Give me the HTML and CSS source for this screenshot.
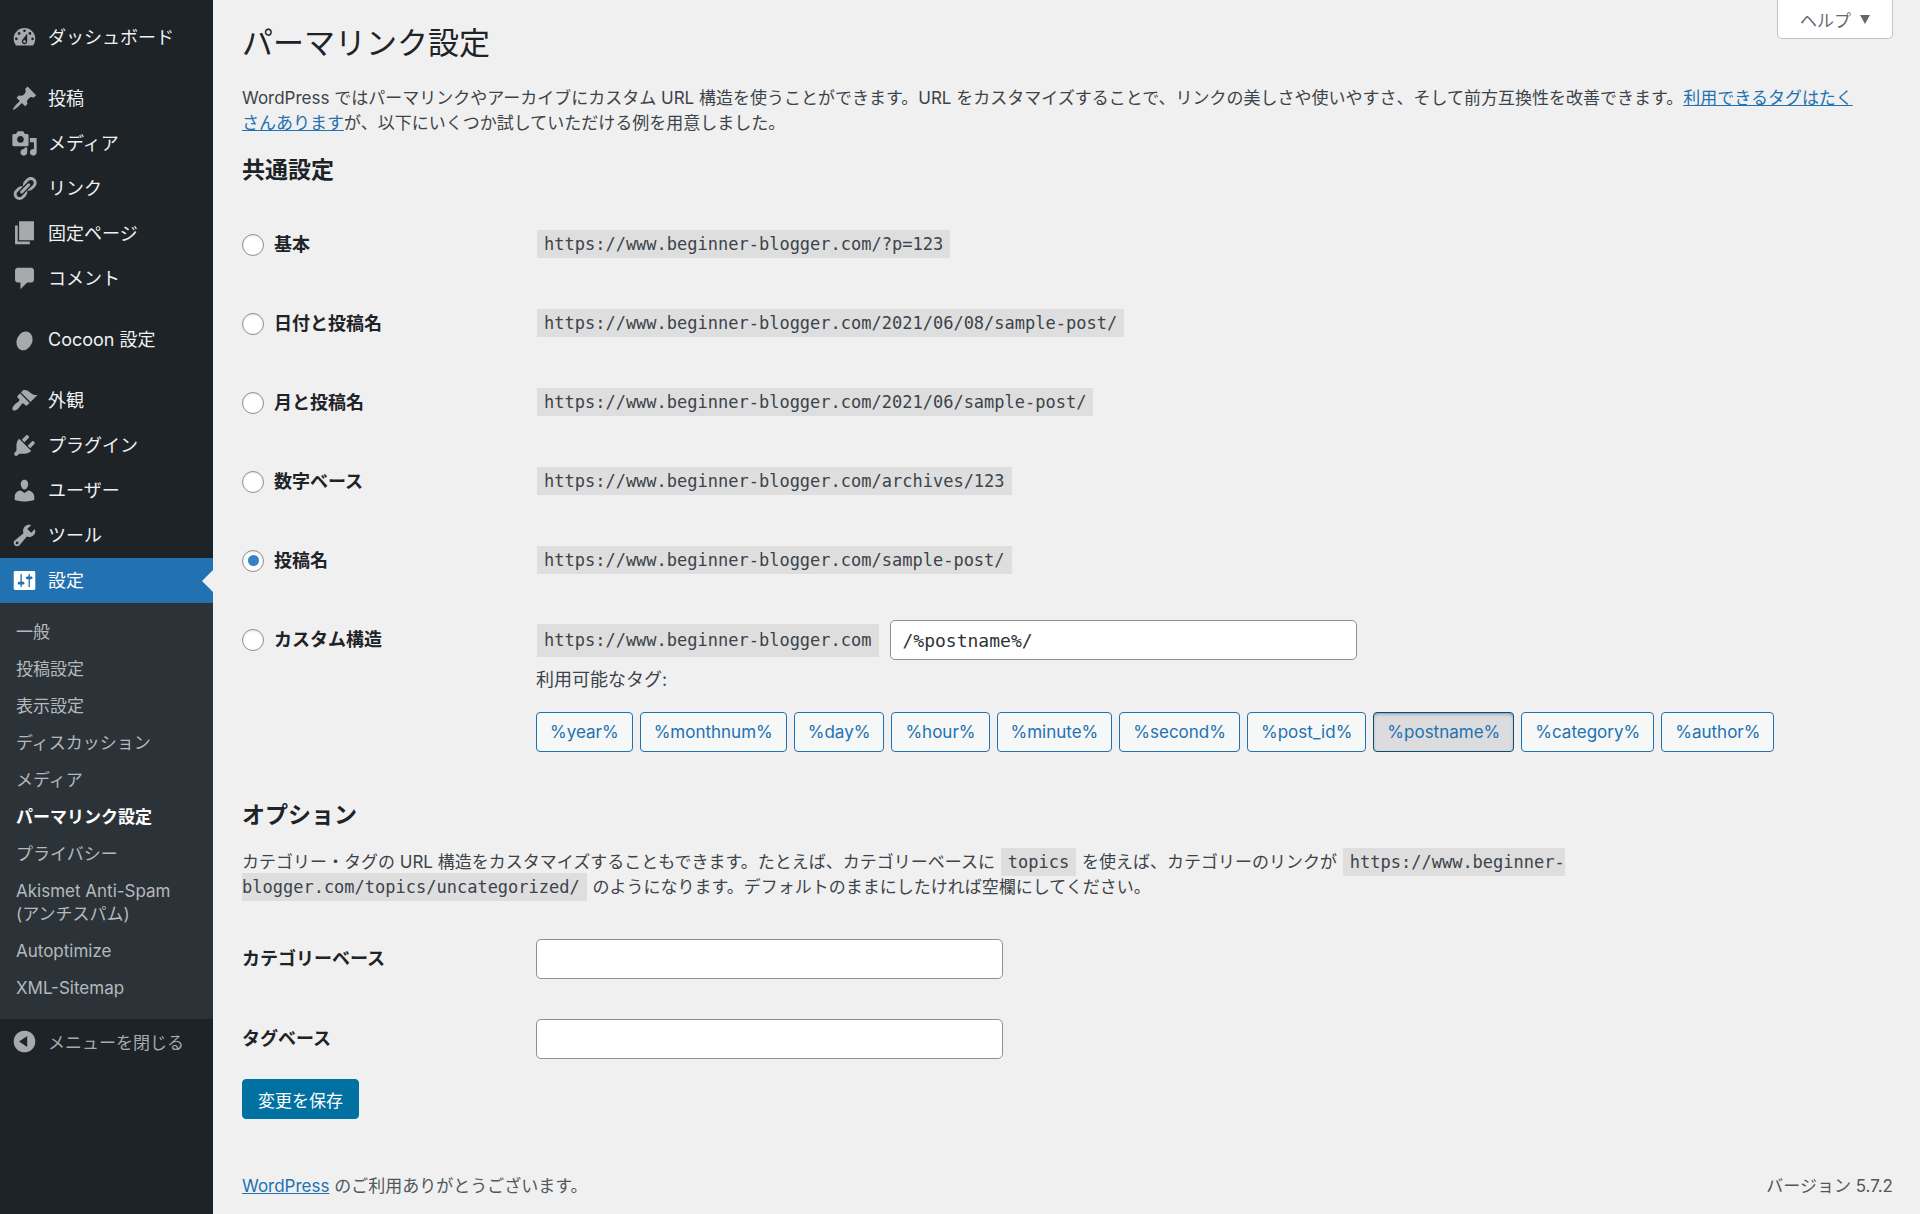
FILE: index.html
```html
<!DOCTYPE html>
<html lang="ja">
<head>
  <meta charset="UTF-8" />
  <title>パーマリンク設定</title>
  <meta name="viewport" content="width=device-width, initial-scale=1.0" />
  <link rel="stylesheet" href="styles.css">
</head>
<body>
  <div class="wrapper">
    <nav class="sidebar">
      <ul class="menu">
        <li class="menu-item">
          <a href="#"><svg class="icon" viewBox="0 0 20 20"><path d="M3.76 16h12.48c1.1-1.37 1.76-3.11 1.76-5 0-4.42-3.58-8-8-8s-8 3.58-8 8c0 1.89.66 3.63 1.76 5zM10 4c.55 0 1 .45 1 1s-.45 1-1 1-1-.45-1-1 .45-1 1-1zM6 6c.55 0 1 .45 1 1s-.45 1-1 1-1-.45-1-1 .45-1 1-1zm8 0c.55 0 1 .45 1 1s-.45 1-1 1-1-.45-1-1 .45-1 1-1zm-5.37 5.55L12 7v6c0 1.1-.9 2-2 2s-2-.9-2-2c0-.57.24-1.08.63-1.45zM4 10c.55 0 1 .45 1 1s-.45 1-1 1-1-.45-1-1 .45-1 1-1zm12 0c.55 0 1 .45 1 1s-.45 1-1 1-1-.45-1-1 .45-1 1-1zm-5 3c0-.55-.45-1-1-1s-1 .45-1 1 .45 1 1 1 1-.45 1-1z"/></svg>ダッシュボード</a>
        </li>
        <li class="menu-item separated">
          <a href="#"><svg class="icon" viewBox="0 0 20 20"><path d="M10.44 3.02l1.82-1.82 6.36 6.35-1.83 1.82c-1.05-.68-2.48-.57-3.41.36l-.75.75c-.92.93-1.04 2.35-.35 3.41l-1.83 1.82-2.41-2.41-2.8 2.79c-.42.42-3.38 2.71-3.8 2.29s1.86-3.39 2.28-3.81l2.79-2.79L4.1 9.36l1.83-1.82c1.05.69 2.48.57 3.4-.36l.75-.75c.93-.92 1.05-2.35.36-3.41z"/></svg>投稿</a>
        </li>
        <li class="menu-item">
          <a href="#"><svg class="icon" viewBox="0 0 20 20"><path d="M13 11V4c0-.55-.45-1-1-1h-1.67L9 1H5L3.67 3H2c-.55 0-1 .45-1 1v7c0 .55.45 1 1 1h10c.55 0 1-.45 1-1zM7 4.5c1.38 0 2.5 1.12 2.5 2.5S8.38 9.5 7 9.5 4.5 8.38 4.5 7 5.62 4.5 7 4.5zM14 6h5v10.5c0 1.38-1.12 2.5-2.5 2.5S14 17.88 14 16.5s1.12-2.5 2.5-2.5c.17 0 .34.02.5.05V9h-3V6zm-4 8.05V13h2v3.5c0 1.38-1.12 2.5-2.5 2.5S7 17.88 7 16.5 8.12 14 9.5 14c.17 0 .34.02.5.05z"/></svg>メディア</a>
        </li>
        <li class="menu-item">
          <a href="#"><svg class="icon" viewBox="0 0 20 20"><path d="M17.74 2.76c1.68 1.69 1.68 4.41 0 6.1l-1.53 1.52c-1.12 1.12-2.7 1.47-4.14 1.09l2.62-2.61.76-.77.76-.76c.84-.84.84-2.2 0-3.04-.84-.85-2.2-.85-3.04 0l-.77.76-3.38 3.38c-.37-1.44-.02-3.02 1.1-4.14l1.52-1.53c1.69-1.68 4.42-1.68 6.1 0zM8.59 13.43l5.34-5.34c.42-.42.42-1.1 0-1.52-.44-.43-1.13-.39-1.53 0l-5.33 5.34c-.42.42-.42 1.1 0 1.52.44.43 1.13.39 1.52 0zm-.76 2.29l4.14-4.15c.38 1.44.03 3.02-1.09 4.14l-1.52 1.53c-1.69 1.68-4.41 1.68-6.1 0-1.68-1.68-1.68-4.42 0-6.1l1.53-1.52c1.12-1.12 2.7-1.47 4.14-1.1l-4.14 4.15c-.85.84-.85 2.2 0 3.05.84.84 2.2.84 3.04 0z"/></svg>リンク</a>
        </li>
        <li class="menu-item">
          <a href="#"><svg class="icon" viewBox="0 0 20 20"><path d="M6 15V1h11v14H6zm-1 1h9v2H3V4h2v12z"/></svg>固定ページ</a>
        </li>
        <li class="menu-item">
          <a href="#"><svg class="icon" viewBox="0 0 20 20"><path d="M5 2h10c1.1 0 2 .9 2 2v7c0 1.1-.9 2-2 2h-3l-5 5v-5H5c-1.1 0-2-.9-2-2V4c0-1.1.9-2 2-2z"/></svg>コメント</a>
        </li>
        <li class="menu-item separated">
          <a href="#"><svg class="icon" viewBox="0 0 20 20"><ellipse cx="10" cy="11" rx="5.7" ry="7.2" transform="rotate(25 10 11)"/></svg>Cocoon 設定</a>
        </li>
        <li class="menu-item separated">
          <a href="#"><svg class="icon" viewBox="0 0 20 20"><path d="M14.48 11.06L7.41 3.99l1.5-1.5c.5-.56 2.3-.47 3.51.32 1.21.8 1.43 1.28 2.91 2.1 1.18.64 2.45 1.26 4.45.85zm-.71.71L6.7 4.7 4.93 6.47c-.39.39-.39 1.02 0 1.41l1.06 1.06c.39.39.39 1.03 0 1.42-.6.6-1.43 1.11-2.21 1.69-.35.26-.7.53-1.01.84C1.43 14.23.4 16.08 1.4 17.07c.99 1 2.84-.03 4.18-1.36.31-.31.58-.66.85-1.02.57-.78 1.08-1.61 1.69-2.21.39-.39 1.02-.39 1.41 0l1.06 1.06c.39.39 1.02.39 1.41 0z"/></svg>外観</a>
        </li>
        <li class="menu-item">
          <a href="#"><svg class="icon" viewBox="0 0 20 20"><path d="M13.11 4.36L9.87 7.6 8 5.73l3.24-3.24c.35-.34 1.05-.2 1.56.32.52.51.66 1.21.31 1.55zm-8 1.77l.91-1.12 9.01 9.01-1.19.84c-.71.71-2.63 1.16-3.82 1.16H6.14L4.9 17.26c-.59.59-1.54.59-2.12 0-.59-.58-.59-1.53 0-2.12l1.24-1.24v-3.88c0-1.13.4-3.19 1.09-3.89zm7.26 3.97l3.24-3.24c.34-.35 1.04-.21 1.55.31.52.51.66 1.21.31 1.55l-3.24 3.25z"/></svg>プラグイン</a>
        </li>
        <li class="menu-item">
          <a href="#"><svg class="icon" viewBox="0 0 20 20"><path d="M10 9.25c-2.27 0-2.73-3.44-2.73-3.44C7 4.02 7.82 2 9.97 2c2.16 0 2.98 2.02 2.71 3.81 0 0-.41 3.44-2.68 3.44zm0 2.57L12.72 10c2.39 0 4.52 2.33 4.52 4.53v2.49s-3.65 1.13-7.24 1.13c-3.65 0-7.24-1.13-7.24-1.13v-2.49c0-2.25 1.94-4.48 4.47-4.48z"/></svg>ユーザー</a>
        </li>
        <li class="menu-item">
          <a href="#"><svg class="icon" viewBox="0 0 20 20"><path d="M16.68 9.77c-1.34 1.34-3.3 1.67-4.95.99l-5.41 6.52c-.99.99-2.59.99-3.58 0s-.99-2.59 0-3.57l6.52-5.42c-.68-1.65-.35-3.61.99-4.95 1.28-1.28 3.12-1.62 4.72-1.06l-2.89 2.89 2.82 2.82 2.86-2.87c.53 1.58.18 3.39-1.08 4.65zM3.81 16.21c.4.39 1.04.39 1.43 0 .4-.4.4-1.04 0-1.43-.39-.4-1.03-.4-1.43 0-.39.39-.39 1.03 0 1.43z"/></svg>ツール</a>
        </li>
        <li class="menu-item current">
          <a href="#"><svg class="icon" viewBox="0 0 20 20"><path d="M18 16V4c0-.55-.45-1-1-1H3c-.55 0-1 .45-1 1v12c0 .55.45 1 1 1h14c.55 0 1-.45 1-1zM8 11h1c.55 0 1 .45 1 1s-.45 1-1 1H8v1.5c0 .28-.22.5-.5.5s-.5-.22-.5-.5V13H6c-.55 0-1-.45-1-1s.45-1 1-1h1V5.5c0-.28.22-.5.5-.5s.5.22.5.5V11zm5-2h-1c-.55 0-1-.45-1-1s.45-1 1-1h1V5.5c0-.28.22-.5.5-.5s.5.22.5.5V7h1c.55 0 1 .45 1 1s-.45 1-1 1h-1v5.5c0 .28-.22.5-.5.5s-.5-.22-.5-.5V9z"/></svg>設定</a>
          <ul class="submenu">
            <li><a href="#">一般</a></li>
            <li><a href="#">投稿設定</a></li>
            <li><a href="#">表示設定</a></li>
            <li><a href="#">ディスカッション</a></li>
            <li><a href="#">メディア</a></li>
            <li><a href="#" class="active">パーマリンク設定</a></li>
            <li><a href="#">プライバシー</a></li>
            <li><a href="#">Akismet Anti-Spam (アンチスパム)</a></li>
            <li><a href="#">Autoptimize</a></li>
            <li><a href="#">XML-Sitemap</a></li>
          </ul>
        </li>
      </ul>
      <button type="button" class="collapse"><svg class="icon" viewBox="0 0 20 20"><path fill-rule="evenodd" d="M10 2a8 8 0 1 0 0 16 8 8 0 0 0 0-16zM12 6v8l-6-4z"/></svg>メニューを閉じる</button>
    </nav>

    <main class="content">
      <div class="top">
        <h1>パーマリンク設定</h1>
        <button type="button" class="help">ヘルプ <span class="arrow"></span></button>
      </div>

      <form>
        <p>WordPress ではパーマリンクやアーカイブにカスタム URL 構造を使うことができます。URL をカスタマイズすることで、リンクの美しさや使いやすさ、そして前方互換性を改善できます。<a href="#">利用できるタグはたく<br>さんあります</a>が、以下にいくつか試していただける例を用意しました。</p>

        <h2>共通設定</h2>
        <table class="form-table permalinks">
          <tr>
            <th><label><input type="radio" name="selection"> 基本</label></th>
            <td><code>https://www.beginner-blogger.com/?p=123</code></td>
          </tr>
          <tr>
            <th><label><input type="radio" name="selection"> 日付と投稿名</label></th>
            <td><code>https://www.beginner-blogger.com/2021/06/08/sample-post/</code></td>
          </tr>
          <tr>
            <th><label><input type="radio" name="selection"> 月と投稿名</label></th>
            <td><code>https://www.beginner-blogger.com/2021/06/sample-post/</code></td>
          </tr>
          <tr>
            <th><label><input type="radio" name="selection"> 数字ベース</label></th>
            <td><code>https://www.beginner-blogger.com/archives/123</code></td>
          </tr>
          <tr>
            <th><label><input type="radio" name="selection" checked> 投稿名</label></th>
            <td><code>https://www.beginner-blogger.com/sample-post/</code></td>
          </tr>
          <tr>
            <th><label><input type="radio" name="selection"> カスタム構造</label></th>
            <td>
              <div class="custom">
                <code>https://www.beginner-blogger.com</code>
                <input type="text" class="text-input" aria-label="カスタム構造" value="/%postname%/">
              </div>
              <div class="tags-label">利用可能なタグ:</div>
              <div class="tags">
                <button type="button" class="btn">%year%</button>
                <button type="button" class="btn">%monthnum%</button>
                <button type="button" class="btn">%day%</button>
                <button type="button" class="btn">%hour%</button>
                <button type="button" class="btn">%minute%</button>
                <button type="button" class="btn">%second%</button>
                <button type="button" class="btn">%post_id%</button>
                <button type="button" class="btn pressed">%postname%</button>
                <button type="button" class="btn">%category%</button>
                <button type="button" class="btn">%author%</button>
              </div>
            </td>
          </tr>
        </table>

        <h2>オプション</h2>
        <p class="hint">カテゴリー・タグの URL 構造をカスタマイズすることもできます。たとえば、カテゴリーベースに <code>topics</code> を使えば、カテゴリーのリンクが <code>https://www.beginner-blogger.com/topics/uncategorized/</code> のようになります。デフォルトのままにしたければ空欄にしてください。</p>

        <table class="form-table options">
          <tr>
            <th><label for="category_base">カテゴリーベース</label></th>
            <td><input type="text" class="text-input" id="category_base"></td>
          </tr>
          <tr>
            <th><label for="tag_base">タグベース</label></th>
            <td><input type="text" class="text-input" id="tag_base"></td>
          </tr>
        </table>

        <button type="button" class="btn primary">変更を保存</button>
      </form>

      <footer class="footer">
        <span><a href="#">WordPress</a> のご利用ありがとうございます。</span>
        <span>バージョン 5.7.2</span>
      </footer>
    </main>
  </div>
</body>
</html>
```
FILE: styles.css
```css
* {
  box-sizing: border-box;
}

body {
  margin: 0;
  background: #f0f0f0;
  color: #3c434a;
  font-family: Inter, "Noto Sans CJK JP", sans-serif;
  font-size: 17px;
  line-height: 25px;
}

button, input {
  font-family: inherit;
}

a {
  color: #2271b1;
}

.wrapper {
  display: flex;
  min-height: 100vh;
}

/* sidebar */
.sidebar {
  flex: 0 0 213px;
  background: #1d2327;
}

.menu {
  list-style: none;
  margin: 0;
  padding: 15px 0 0;
}

.menu-item > a {
  display: flex;
  align-items: center;
  height: 45px;
  color: #f0f0f1;
  font-size: 18px;
  text-decoration: none;
}

.separated {
  margin-top: 16px;
}

.icon {
  width: 27px;
  height: 27px;
  margin: 0 10px 0 11px;
  fill: #a7aaad;
}

.current > a {
  position: relative;
  background: #2271b1;
  color: #fff;
}

.current > a::after {
  content: "";
  position: absolute;
  right: 0;
  border: 11px solid transparent;
  border-left: 0;
  border-right-color: #f0f0f0;
}

.current .icon {
  fill: #fff;
}

.submenu {
  list-style: none;
  margin: 0;
  padding: 11px 0 12px;
  background: #2c3338;
}

.submenu a {
  display: block;
  padding: 7px 16px;
  color: #b4b9be;
  line-height: 23px;
  text-decoration: none;
}

.submenu .active {
  color: #fff;
  font-weight: bold;
}

.collapse {
  display: flex;
  align-items: center;
  width: 100%;
  height: 45px;
  padding: 0;
  border: none;
  background: none;
  color: #a7aaad;
  font-size: 17px;
  cursor: pointer;
}

/* content */
.content {
  flex: 1;
  min-width: 0;
  padding: 0 27px 0 29px;
}

.top {
  display: flex;
  justify-content: space-between;
  align-items: flex-start;
}

h1 {
  margin: 0;
  padding: 23px 0 19px;
  color: #1d2327;
  font-size: 31px;
  font-weight: 400;
  line-height: 40px;
}

.help {
  display: flex;
  align-items: center;
  gap: 9px;
  height: 39px;
  padding: 0 22px;
  border: 1px solid #c3c4c7;
  border-top: none;
  border-radius: 0 0 5px 5px;
  background: #fff;
  color: #646970;
  font-size: 17px;
  cursor: pointer;
}

.arrow {
  border: 5px solid transparent;
  border-top: 9px solid #646970;
  border-bottom: 0;
}

p {
  margin: 4px 0 19px;
}

.hint {
  margin-top: 20px;
}

h2 {
  margin: 0;
  color: #1d2327;
  font-size: 23px;
  font-weight: bold;
  line-height: 30px;
}

code {
  margin: 0 1px;
  padding: 4px 7px;
  background: #dededf;
  font-family: "DejaVu Sans Mono", monospace;
  font-size: 17px;
}

.form-table {
  width: 100%;
  border-collapse: collapse;
}

.form-table th {
  width: 294px;
  padding: 27px 13px 27px 0;
  color: #1d2327;
  font-size: 18px;
  font-weight: bold;
  text-align: left;
  vertical-align: top;
}

.form-table td {
  padding: 27px 0;
  vertical-align: top;
}

.permalinks {
  margin: 20px 0 48px;
}

.form-table label {
  display: flex;
  align-items: center;
}

input[type="radio"] {
  appearance: none;
  display: flex;
  align-items: center;
  justify-content: center;
  width: 22px;
  height: 22px;
  margin: 0 10px 0 0;
  border: 1px solid #8c8f94;
  border-radius: 50%;
  background: #fff;
  box-shadow: inset 0 1px 2px rgba(0,0,0,0.1);
}

input[type="radio"]:checked::before {
  content: "";
  width: 11px;
  height: 11px;
  border-radius: 50%;
  background: #3582c4;
}

.text-input {
  width: 467px;
  height: 40px;
  padding: 0 12px;
  border: 1px solid #8c8f94;
  border-radius: 5px;
  background: #fff;
  color: #2c3338;
  font-family: "DejaVu Sans Mono", monospace;
  font-size: 18px;
}

.form-table .custom {
  display: flex;
  align-items: center;
  gap: 10px;
}

.form-table tr:last-child td,
.options td {
  padding: 20px 0;
}

.form-table.permalinks tr:last-child td {
  padding-bottom: 0;
}

.tags-label {
  margin: 7px 0 20px;
  font-size: 18px;
}

.tags {
  display: flex;
  flex-wrap: wrap;
  gap: 7px;
}

.btn {
  height: 40px;
  padding: 0 13px;
  border: 1px solid #2271b1;
  border-radius: 4px;
  background: #f6f7f7;
  color: #2271b1;
  font-size: 17px;
  cursor: pointer;
}

.pressed {
  border-color: #0a4b78;
  background: #dcdcde;
  box-shadow: inset 0 2px 5px -3px #0a4b78;
}

.primary {
  padding: 0 15px;
  border-color: #0071a1;
  background: #0071a1;
  color: #fff;
}

.footer {
  display: flex;
  justify-content: space-between;
  padding: 55px 0 14px;
  color: #50575e;
}
```
